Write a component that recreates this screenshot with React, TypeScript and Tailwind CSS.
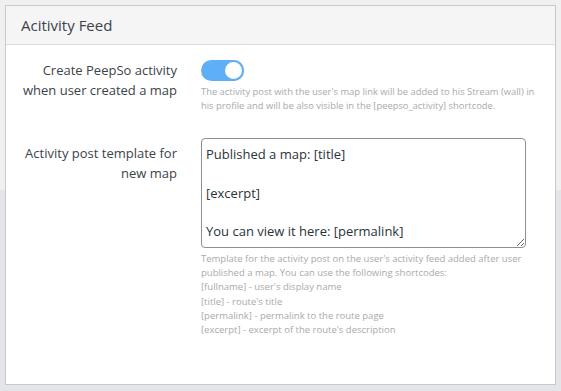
export default function App() {
  return (
    <div
      className="relative min-h-[391px] bg-[#e4e5e9] p-[5px]"
      style={{ fontFamily: '"Open Sans", "Liberation Sans", sans-serif' }}
    >
      <div className="absolute inset-x-0 top-0 h-[190px] bg-[#f0f0f1]" />
      <div className="relative h-[380px] border border-[#c9c9c9] bg-white">
        <div className="flex h-[39px] items-center border-b border-[#dcdcde] bg-[#f5f5f5] px-[15px] text-[15px] text-[#3c434a]">
          Acitivity Feed
        </div>

        <div className="flex pt-[15px]">
          <div className="w-[171px] shrink-0 text-right text-[13px] leading-[20px] text-[#3c434a]">
            Create PeepSo activity
            <br />
            when user created a map
          </div>
          <div className="ml-[24px] flex-1 pr-[10px]">
            <div className="relative h-[21px] w-[43px] rounded-full bg-[#5eaff5]">
              <div className="absolute right-0 top-0 h-[21px] w-[21px] rounded-full border-2 border-[#5eaff5] bg-white" />
            </div>
            <p className="mt-[4px] whitespace-nowrap text-[9.4px] leading-[14px] text-[#a7aaad]">
              The activity post with the user's map link will be added to his Stream (wall) in
              <br />
              his profile and will be also visible in the [peepso_activity] shortcode.
            </p>
          </div>
        </div>

        <div className="mt-[25px] flex">
          <div className="w-[171px] shrink-0 pt-[5px] text-right text-[13px] leading-[20px] text-[#3c434a]">
            Activity post template for
            <br />
            new map
          </div>
          <div className="ml-[24px] flex-1 pr-[30px]">
            <textarea
              className="block h-[110px] w-[325px] resize-y rounded-[4px] border border-[#8c8f94] px-[4px] pt-[6px] pb-[4px] text-[13px] leading-[19.3px] text-[#2c3338] outline-none"
              defaultValue={'Published a map: [title]\n\n[excerpt]\n\nYou can view it here: [permalink]'}
            />
            <p className="mt-[4px] whitespace-nowrap text-[9.5px] leading-[14.2px] text-[#a7aaad]">
              Template for the activity post on the user's activity feed added after user
              <br />
              published a map. You can use the following shortcodes:
              <br />
              [fullname] - user's display name
              <br />
              [title] - route's title
              <br />
              [permalink] - permalink to the route page
              <br />
              [excerpt] - excerpt of the route's description
            </p>
          </div>
        </div>
      </div>
    </div>
  );
}
